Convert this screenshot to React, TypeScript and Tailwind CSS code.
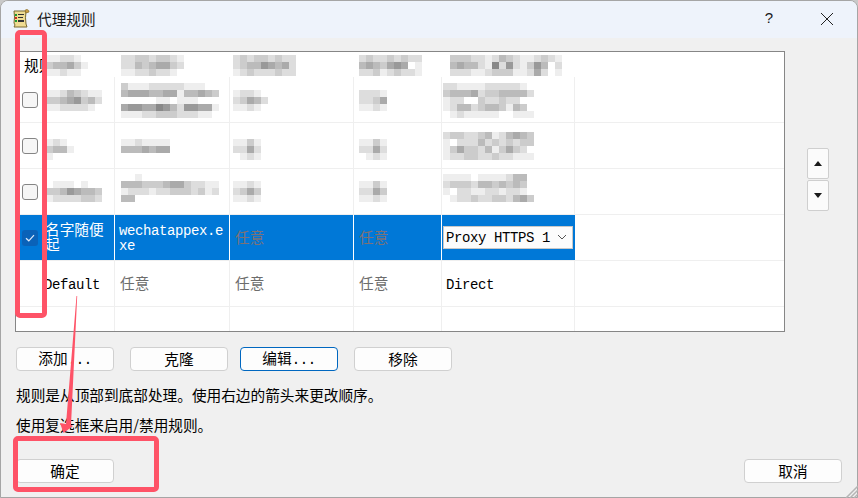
const cjk = "font-['Noto_Sans_CJK_SC','Liberation_Sans',sans-serif]";
const mono = "font-['Liberation_Mono','Noto_Sans_CJK_SC',monospace]";

// blurred-out cell contents, one digit per 7px block (0 = white, 9 = dark)
const Mosaic = ({ data, className = "" }: { data: string[]; className?: string }) => (
  <svg
    width={data[0].length * 7}
    height={data.length * 7}
    className={`relative block shrink-0 ${className}`}
    shapeRendering="crispEdges"
  >
    {data.map((row, y) =>
      row.split("").map((d, x) => {
        const v = 255 - Number(d) * 17;
        return <rect key={x} x={x * 7} y={y * 7} width={7} height={7} fill={`rgb(${v},${v},${v})`} />;
      })
    )}
  </svg>
);

const Cell = ({ className = "", children }: { className?: string; children?: React.ReactNode }) => (
  <div className={`border-r border-[#efefef] overflow-hidden flex items-start ${className}`}>{children}</div>
);

const Checkbox = ({ checked = false }: { checked?: boolean }) =>
  checked ? (
    <div className="w-4 h-4 ml-[6px] mt-[15px] rounded-[3px] bg-[#0a62b8] flex items-center justify-center shrink-0">
      <svg width="10" height="8" viewBox="0 0 10 8" fill="none" stroke="#dfeafa" strokeWidth="1.2">
        <path d="M1 4.2 L3.8 6.8 L9 1.2" />
      </svg>
    </div>
  ) : (
    <div className="w-4 h-4 ml-[6px] mt-[15px] rounded-[3px] border border-[#858585] bg-[#f6f6f6] shrink-0" />
  );

const cols = "grid grid-cols-[99px_115px_124px_88px_133px_1fr]";
const monoText = "text-[14px] tracking-[-0.4px]";

const rows = [
  {
    c1: ["11243211", "33456342", "11222210"],
    c2: ["31112222211100", "45554455144543", "00000110111000", "56655764266551", "11122333222110"],
    c3: ["12210", "23542", "11210"],
    c4: ["22210", "22350", "11210"],
    c5: ["22111122222100", "34445233444420", "12200322322000", "12442344314300", "01211111001110"],
    top1: "mt-[13px]",
    top2: "mt-[6px]",
    top5: "mt-[6px]",
  },
  {
    c1: ["1210", "3441", "1000"],
    c2: ["11211110", "44454550"],
    c3: ["11310", "22520", "01210"],
    c4: ["11310", "22520", "01210"],
    c5: ["2332234124543", "1022242323233", "1353324135320", "1223322322111"],
    top1: "mt-[16px]",
    top2: "mt-[16px]",
    top5: "mt-[9px]",
  },
  {
    c1: ["01110100", "33465443", "12222332"],
    c2: ["00100000000000", "44433345532211", "12221223332312", "44000000000000"],
    c3: ["11210", "23530", "11210"],
    c4: ["11310", "22530", "11210"],
    c5: ["1111011112440", "2333244343430", "1022112212210", "0122322332453"],
    top1: "mt-[12px]",
    top2: "mt-[5px]",
    top5: "mt-[5px]",
  },
];

const Btn = ({ label, dots = false, className = "" }: { label: string; dots?: boolean; className?: string }) => (
  <button
    className={`w-[98px] h-6 rounded-[4px] border bg-[#fdfdfd] text-[14.67px] leading-none text-black ${cjk} ${className || "border-[#d0d0d0]"}`}
  >
    {label}
    {dots && <span className={`${mono} ${monoText}`}>...</span>}
  </button>
);

export default function App() {
  return (
    <div className="relative w-[858px] h-[498px] bg-[#c9c9c9] overflow-hidden">
      <div className="w-full h-full flex flex-col bg-[#f0f0f0] rounded-t-[8px] border border-[#a5a5a5] overflow-hidden">
        {/* title bar */}
        <div className={`h-[37px] shrink-0 flex items-center pb-[2px] bg-[#eef3fb] text-[14.67px] text-[#1a1a1a] ${cjk}`}>
          <svg width="20" height="20" viewBox="0 0 20 20" className="ml-[9px]">
            <path d="M4 2 H16 Q15 9 16 15 L17 18 H4 Q6 16 4 14 Q5 8 4 2 Z" fill="#efdc92" stroke="#7a6a30" strokeWidth="1" />
            <path d="M15 1.5 a2.2 2.2 0 0 1 4 1.5 l-3 1 Z" fill="#c9a046" stroke="#8a6a20" strokeWidth="0.7" />
            <rect x="5" y="5" width="2" height="2" fill="#1d9a30" />
            <rect x="5" y="8" width="2" height="2" fill="#d02a20" />
            <rect x="5" y="11" width="2" height="2" fill="#1d9a30" />
            <rect x="8" y="5" width="6" height="1" fill="#333" />
            <rect x="8" y="8" width="5" height="1" fill="#333" />
            <rect x="8" y="11" width="6" height="2" fill="#333" />
          </svg>
          <span className="ml-[7px]">代理规则</span>
          <span className="ml-auto text-[15px] font-['Liberation_Sans',sans-serif]">?</span>
          <svg width="12" height="12" viewBox="0 0 12 12" stroke="#222" strokeWidth="1" className="ml-[48px] mr-[24px]">
            <path d="M0 0 L12 12 M12 0 L0 12" />
          </svg>
        </div>

        <div className="flex-1 flex flex-col pl-[14px] pr-[15px] pt-[13px]">
          <div className="flex">
            {/* rules table */}
            <div className="w-[770px] h-[281px] bg-white border border-[#868686] flex flex-col overflow-hidden">
              <div className={`${cols} h-[25px] shrink-0`}>
                <div className="flex items-start">
                  <span className={`ml-2 mt-[2px] text-[14.67px] text-black whitespace-nowrap w-[22px] ${cjk}`}>规则</span>
                  <Mosaic className="mt-[3px]" data={["112210", "344531", "112110"]} />
                </div>
                <div className="flex items-start">
                  <Mosaic className="ml-[6px] mt-[3px]" data={["223323321", "224345532", "112232210"]} />
                </div>
                <div className="flex items-start">
                  <Mosaic className="ml-[3px] mt-[3px]" data={["232332322", "234465452", "123222322"]} />
                </div>
                <div className="flex items-start">
                  <Mosaic className="ml-[5px] mt-[3px]" data={["232232322", "454356501", "223123221"]} />
                </div>
                <div className="flex items-start">
                  <Mosaic className="ml-2 mt-[3px]" data={["3332212432112321", "4544217262136402", "2221123331125201"]} />
                </div>
                <div />
              </div>

              {rows.map((r, i) => (
                <div key={i} className={`${cols} h-[45px] shrink-0 border-b border-[#efefef] box-content`}>
                  <Cell>
                    <Checkbox />
                    <Mosaic className={`ml-2 ${r.top1}`} data={r.c1} />
                  </Cell>
                  <Cell>
                    <Mosaic className={`ml-[6px] ${r.top2}`} data={r.c2} />
                  </Cell>
                  <Cell>
                    <Mosaic className={`ml-[3px] ${r.top1}`} data={r.c3} />
                  </Cell>
                  <Cell>
                    <Mosaic className={`ml-[5px] ${r.top1}`} data={r.c4} />
                  </Cell>
                  <Cell>
                    <Mosaic className={`ml-[1px] ${r.top5}`} data={r.c5} />
                  </Cell>
                  <div />
                </div>
              ))}

              {/* selected row */}
              <div className={`${cols} h-[45px] shrink-0 border-b border-[#efefef] box-content`}>
                <div className="bg-[#0078d7] border-r border-white flex items-start">
                  <Checkbox checked />
                  <span className={`ml-[7px] mt-[6px] w-[64px] text-[14.67px] leading-[15px] text-white ${cjk}`}>名字随便起</span>
                </div>
                <div className={`bg-[#0078d7] border-r border-white pl-1 pt-[9px] leading-[15px] text-white break-all ${mono} ${monoText}`}>
                  wechatappex.exe
                </div>
                <div className={`bg-[#0078d7] border-r border-white pl-[5px] pt-[13px] text-[14.67px] leading-[18px] text-[#7d7276] ${cjk}`}>任意</div>
                <div className={`bg-[#0078d7] border-r border-white pl-[5px] pt-[13px] text-[14.67px] leading-[18px] text-[#7d7276] ${cjk}`}>任意</div>
                <div className="bg-[#0078d7] pl-[1px] pt-[11px]">
                  <div className={`w-[130px] h-[23px] bg-[#fcfcfc] border border-[#c8c8c8] flex items-center pl-[2px] pt-[2px] text-black ${mono} ${monoText}`}>
                    Proxy HTTPS 1
                    <svg width="10" height="6" viewBox="0 0 10 6" fill="none" stroke="#555" className="ml-auto mr-[5px] -mt-[3px]">
                      <path d="M1 1 L5 5 L9 1" />
                    </svg>
                  </div>
                </div>
                <div />
              </div>

              {/* default row */}
              <div className={`${cols} h-[45px] shrink-0 border-b border-[#efefef] box-content`}>
                <Cell className={`pl-[28px] pt-[15px] leading-[18px] text-black ${mono} ${monoText}`}>Default</Cell>
                <Cell className={`pl-[5px] pt-[13px] text-[14.67px] leading-[18px] text-[#6d6d6d] ${cjk}`}>任意</Cell>
                <Cell className={`pl-[5px] pt-[13px] text-[14.67px] leading-[18px] text-[#6d6d6d] ${cjk}`}>任意</Cell>
                <Cell className={`pl-[5px] pt-[13px] text-[14.67px] leading-[18px] text-[#6d6d6d] ${cjk}`}>任意</Cell>
                <Cell className={`pl-1 pt-[15px] leading-[18px] text-black ${mono} ${monoText}`}>Direct</Cell>
                <div />
              </div>

              <div className={`${cols} flex-1`}>
                <Cell />
                <Cell />
                <Cell />
                <Cell />
                <Cell />
                <div />
              </div>
            </div>

            {/* move up / down */}
            <div className="ml-[22px] mt-[97px] flex flex-col gap-[1px]">
              <div className="w-[22px] h-[31px] bg-[#fbfbfb] border border-[#cfcfcf] rounded-[2px] flex items-center justify-center">
                <svg width="8" height="5" viewBox="0 0 8 5"><path d="M4 0 L8 5 H0 Z" fill="#1a1a1a" /></svg>
              </div>
              <div className="w-[22px] h-[31px] bg-[#fbfbfb] border border-[#cfcfcf] rounded-[2px] flex items-center justify-center">
                <svg width="8" height="5" viewBox="0 0 8 5"><path d="M4 5 L8 0 H0 Z" fill="#1a1a1a" /></svg>
              </div>
            </div>
          </div>

          <div className="flex mt-[15px] ml-px">
            <Btn label="添加" dots />
            <Btn label="克隆" className="ml-4 border-[#d0d0d0]" />
            <Btn label="编辑" dots className="ml-3 border-[#0067c0]" />
            <Btn label="移除" className="ml-4 border-[#d0d0d0]" />
          </div>

          <p className={`mt-[14px] ml-px text-[14.67px] leading-[20px] text-black ${cjk}`}>规则是从顶部到底部处理。使用右边的箭头来更改顺序。</p>
          <p className={`mt-[10px] ml-px text-[14.67px] leading-[20px] text-black ${cjk}`}>使用复选框来启用/禁用规则。</p>

          <div className="flex justify-between mt-[24px] ml-px">
            <Btn label="确定" />
            <Btn label="取消" />
          </div>
        </div>
      </div>

      {/* resize grip */}
      <svg width="14" height="14" viewBox="0 0 14 14" stroke="#b5b5b5" strokeWidth="1.5" className="absolute right-0 bottom-0">
        <path d="M14 2 L2 14 M14 6 L6 14 M14 10 L10 14" />
      </svg>

      {/* red annotations drawn over the screenshot */}
      <div className="absolute left-[15px] top-[30px] w-[32px] h-[288px] border-[5px] border-[#fe5367] rounded-[5px]" />
      <div className="absolute left-[13px] top-[436px] w-[146px] h-[56px] border-[5px] border-[#fe5367] rounded-[5px]" />
      <svg width="858" height="498" className="absolute left-0 top-0 pointer-events-none">
        <polygon points="76.5,296 77.2,296 71,425 73,426 63.5,433 60,423 66,424" fill="#fe5367" />
      </svg>
    </div>
  );
}
